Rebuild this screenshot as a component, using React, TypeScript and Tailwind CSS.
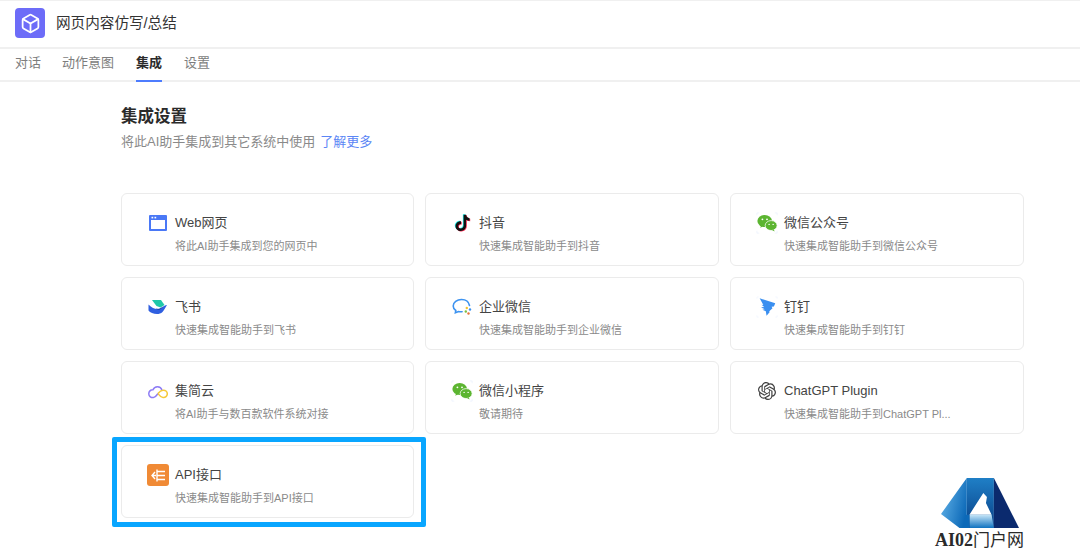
import type { ReactNode } from "react";
import { Box } from "lucide-react";
import { SiOpenai } from "react-icons/si";

const tiktokPath =
  "M13.2 2h2.9c.2 1.9 1.3 3.5 3.9 3.9v3c-1.5 0-2.8-.4-3.9-1.2v6.6c0 3.6-2.6 6.2-6 6.2S4 17.900 4 15c0-3.300 2.900-5.900 6.300-5.500v3.100c-1.700-.3-3.200.9-3.200 2.500 0 1.500 1.200 2.600 2.700 2.600 1.800 0 3.400-1.200 3.400-3.400z";

function WebIcon() {
  return (
    <svg viewBox="0 0 18 16" className="h-4 w-[18px]">
      <rect x="0" y="0" width="18" height="16" rx="1" fill="#4a78f6" />
      <rect x="2" y="5" width="14" height="9" fill="#fff" />
      <rect x="2.500" y="1.800" width="1.700" height="1.600" fill="#fff" />
      <rect x="5.500" y="1.800" width="1.700" height="1.600" fill="#fff" />
    </svg>
  );
}

function TiktokIcon() {
  return (
    <svg viewBox="0 0 24 24" className="h-[21px] w-[21px]">
      <path d={tiktokPath} fill="#25f4ee" transform="translate(-0.8 -0.6)" />
      <path d={tiktokPath} fill="#fe2c55" transform="translate(0.8 0.6)" />
      <path d={tiktokPath} fill="#111" />
    </svg>
  );
}

function WechatIcon() {
  return (
    <svg viewBox="0 0 24 24" className="h-[22px] w-[22px]">
      <g fill="none" stroke="#dbe9fb" strokeWidth="0.5">
        <path d="M1 3.500V1h2.500M20.500 1H23v2.500M1 20.500V23h2.500M20.500 23H23v-2.500" />
      </g>
      <ellipse cx="9.500" cy="9.800" rx="8" ry="6.600" fill="#5cb531" />
      <path d="M5.500 14.500l-.8 2.800 3.200-1.700z" fill="#5cb531" />
      <ellipse cx="16.500" cy="14.800" rx="6.500" ry="5.400" fill="#5cb531" stroke="#fff" strokeWidth="0.800" />
      <path d="M19.500 19l.7 2.200-2.800-1.500z" fill="#5cb531" />
      <circle cx="7" cy="8" r="1" fill="#fff" />
      <circle cx="12" cy="8" r="1" fill="#fff" />
      <circle cx="14.300" cy="13.500" r="0.800" fill="#fff" />
      <circle cx="18.700" cy="13.500" r="0.800" fill="#fff" />
    </svg>
  );
}

function FeishuIcon() {
  return (
    <svg viewBox="0 0 20 16" className="h-4 w-5">
      <path d="M4 1h9l3.500 5-4 2.500L8.500 7z" fill="#1fc8a8" />
      <path d="M0.500 5.500c3 3 6 4.500 9 4.500 3 0 6-3.500 9.500-4-1.500 2-2.500 5-4.500 7-1.500 1.500-3.500 2-5.500 2-3.500 0-7-1.500-8.500-3.500z" fill="#2f5fe0" />
      <path d="M8 9.500c2.500.8 4 .5 5.500-.8l3-2.500c-1.500.800-3 3.800-5 4.300-1 .2-2.500 0-3.500-1z" fill="#12307f" />
    </svg>
  );
}

function WecomIcon() {
  return (
    <svg viewBox="0 0 20 18" className="h-[18px] w-5" fill="none">
      <path
        d="M17.500 7.500C16.800 3.800 13.500 1.500 9.500 1.500 5 1.500 1.200 4.300 1.200 8c0 1.900 1 3.500 2.600 4.500L3.400 14.800l3.100-1.300c1 .3 2.300.4 3.600.2"
        stroke="#3d93f0"
        strokeWidth="1.600"
        strokeLinecap="round"
      />
      <circle cx="18" cy="11.500" r="1.200" fill="#3d93f0" />
      <circle cx="14.800" cy="10" r="1.200" fill="#f4c430" />
      <circle cx="13.800" cy="13.500" r="1.200" fill="#7cc142" />
      <circle cx="16.500" cy="15.500" r="1.200" fill="#e8743b" />
    </svg>
  );
}

function DingtalkIcon() {
  return (
    <svg viewBox="0 0 24 24" className="h-[22px] w-[22px]">
      <g fill="none" stroke="#e6f0fc" strokeWidth="0.5">
        <path d="M1 3V1h2M21 1h2v2M1 21v2h2M21 23h2v-2" />
      </g>
      <path
        d="M4 2.500l17 5.500-1.500 3.500-2.500.3 1 1.500-3.500 3.200.3 1.200-3.300 3.800-.8-5-3.700-1.500 2.500-.5-4-2.300 3.500-.2-3-2.500 2 .2z"
        fill="#3a8ff0"
      />
    </svg>
  );
}

function JijianIcon() {
  return (
    <svg viewBox="0 0 20 15" className="h-[15px] w-5" fill="none" strokeWidth="1.500">
      <path
        d="M14 6A4.800 4.800 0 0 0 5 5.800 3.900 3.900 0 1 0 5.500 13.500C7.500 13.500 8.500 11.500 10 9.500"
        stroke="#8d7cf5"
      />
      <path
        d="M10 9.500C11.500 7.500 12.500 6.200 15 6.200A3.700 3.700 0 1 1 15 13.500C12.500 13.500 11.500 11.500 10 9.500"
        stroke="#f5c93a"
      />
    </svg>
  );
}

function ApiIcon() {
  return (
    <svg viewBox="0 0 22 22" className="h-[22px] w-[22px]">
      <rect width="22" height="22" rx="3" fill="#f08a35" />
      <g fill="none" stroke="#fff" strokeWidth="1.400">
        <path d="M8 8l-3 3.500 3 3.500M5 11.500h4" />
        <path d="M10 5.500v12M10 7.500h8M10 11.500h8M10 15.500h8" />
      </g>
    </svg>
  );
}

function GptIcon() {
  return <SiOpenai className="h-[18px] w-[18px] text-[#3f3f3f]" />;
}

const cards: { title: string; desc: string; icon: ReactNode; highlight?: boolean }[] = [
  { title: "Web网页", desc: "将此AI助手集成到您的网页中", icon: <WebIcon /> },
  { title: "抖音", desc: "快速集成智能助手到抖音", icon: <TiktokIcon /> },
  { title: "微信公众号", desc: "快速集成智能助手到微信公众号", icon: <WechatIcon /> },
  { title: "飞书", desc: "快速集成智能助手到飞书", icon: <FeishuIcon /> },
  { title: "企业微信", desc: "快速集成智能助手到企业微信", icon: <WecomIcon /> },
  { title: "钉钉", desc: "快速集成智能助手到钉钉", icon: <DingtalkIcon /> },
  { title: "集简云", desc: "将AI助手与数百款软件系统对接", icon: <JijianIcon /> },
  { title: "微信小程序", desc: "敬请期待", icon: <WechatIcon /> },
  { title: "ChatGPT Plugin", desc: "快速集成智能助手到ChatGPT Pl...", icon: <GptIcon /> },
  { title: "API接口", desc: "快速集成智能助手到API接口", icon: <ApiIcon />, highlight: true },
];

function Card({ title, desc, icon, highlight }: (typeof cards)[number]) {
  return (
    <div className="relative flex h-[73px] rounded-[6px] border border-[#ebebeb] bg-white pl-[53px] pr-3 pt-[20px]">
      <div className="absolute left-[24px] top-[19px] flex h-[20px] w-[24px] items-center justify-center">
        {icon}
      </div>
      <div className="min-w-0">
        <div className="text-[13px] leading-[18px] text-[#444]">{title}</div>
        <div className="mt-[7px] text-[11px] leading-[14px] text-[#8a8a8a]">{desc}</div>
      </div>
      {highlight && (
        <div className="absolute -bottom-[10px] -left-[10px] -right-[13px] -top-[9px] rounded-[2px] border-[5px] border-[#09a6ff]" />
      )}
    </div>
  );
}

function Watermark() {
  return (
    <div className="absolute bottom-0 left-[935px] h-[73px] w-[92px] bg-white">
      <svg viewBox="62 40 236 150" className="ml-[6px] block h-[50px] w-[78px]" preserveAspectRatio="none">
        <defs>
          <linearGradient id="wing" x1="0" y1="0" x2="1" y2="0.400">
            <stop offset="0" stopColor="#6ab9ec" />
            <stop offset="1" stopColor="#0c69b8" />
          </linearGradient>
          <linearGradient id="mid" x1="0" y1="0" x2="0" y2="1">
            <stop offset="0" stopColor="#1f7fc6" />
            <stop offset="1" stopColor="#083f86" />
          </linearGradient>
          <linearGradient id="strip" x1="0" y1="0" x2="0" y2="1">
            <stop offset="0" stopColor="#c7e6f8" />
            <stop offset="1" stopColor="#0f72c0" />
          </linearGradient>
        </defs>
        <polygon points="140,40 222,40 222,190 140,190" fill="url(#mid)" />
        <polygon points="222,40 298,190 222,190" fill="#0b2a6e" />
        <polygon points="190,85 201,97 198,115 215,150 148,150" fill="#fff" />
        <polygon points="148,150 215,150 222,190 148,190" fill="url(#strip)" />
        <polygon points="140,40 62,148 118,190 148,190 148,150 140,150" fill="url(#wing)" />
      </svg>
      <div className="mt-[3px] whitespace-nowrap text-[17px] leading-[19px] text-[#2a2a2a] [font-family:'Liberation_Serif','Noto_Sans_CJK_SC',serif]">
        <span className="text-[18px] font-bold">AI02</span>
        <span className="font-normal">门户网</span>
      </div>
    </div>
  );
}

export default function App() {
  return (
    <div className="relative h-[551px] w-[1080px] overflow-hidden bg-white [font-family:'Liberation_Sans','Noto_Sans_CJK_SC',sans-serif]">
      <header className="flex h-[49px] items-center gap-[11px] border-b-2 border-t border-[#f0f0f0] pb-[1px] pl-[15px]">
        <div className="mb-[1px] flex h-[30px] w-[30px] items-center justify-center rounded-[4px] bg-[#6d6cf8]">
          <Box className="h-[21px] w-[21px] text-white" strokeWidth={2} />
        </div>
        <span className="text-[14.600px] text-[#333]">网页内容仿写/总结</span>
      </header>

      <nav className="flex h-[33px] gap-[21px] border-b-2 border-[#f0f0f0] pl-[15px] text-[13px] leading-[28px] text-[#7d7d7d]">
        <span>对话</span>
        <span>动作意图</span>
        <span className="relative ml-[1px] font-bold text-[#2b2b2b]">
          集成
          <span className="absolute inset-x-0 -bottom-[2px] h-[2px] bg-[#4d7cfe]" />
        </span>
        <span className="ml-[1px]">设置</span>
      </nav>

      <main className="pl-[121px] pr-[56px]">
        <h1 className="mt-[23px] text-[16.500px] font-bold leading-[22px] text-[#2b2b2b]">集成设置</h1>
        <p className="mt-[6px] text-[13px] leading-[18px] text-[#8a8a8a]">
          将此AI助手集成到其它系统中使用
          <span className="ml-[5px] text-[#5b86f5]">了解更多</span>
        </p>
        <div className="mt-[42px] grid grid-cols-[293px_294px_294px] gap-[11px]">
          {cards.map((c) => (
            <Card key={c.title} {...c} />
          ))}
        </div>
      </main>

      <Watermark />
    </div>
  );
}
